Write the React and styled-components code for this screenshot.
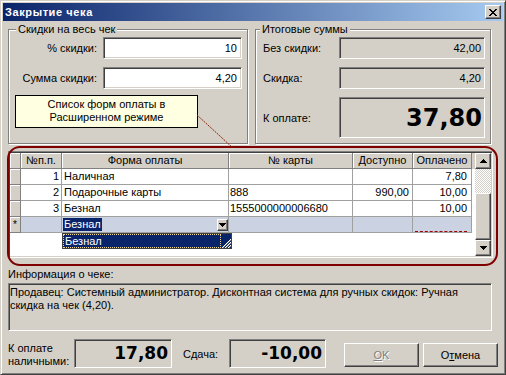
import React from 'react';
import styled, { createGlobalStyle, css } from 'styled-components';

const FACE = '#D4D0C8';

const GlobalStyle = createGlobalStyle`
  html, body { margin: 0; padding: 0; background: ${FACE}; }
  body { font-family: "Liberation Sans", Arial, sans-serif; font-size: 11px; color: #000; }
  *, *::before, *::after { box-sizing: border-box; }
`;

const raised = css`
  border: 1px solid;
  border-color: #fff #404040 #404040 #fff;
  box-shadow: inset -1px -1px #808080;
  background: ${FACE};
`;

const sunken = css`
  border: 1px solid;
  border-color: #808080 #fff #fff #808080;
  box-shadow: inset 1px 1px #404040, inset -1px -1px ${FACE};
`;

const Window = styled.div`
  position: relative;
  width: 506px;
  height: 375px;
  overflow: hidden;
  background: ${FACE};
  border: 1px solid;
  border-color: ${FACE} #404040 #404040 ${FACE};
  box-shadow: inset 1px 1px #fff, inset -1px -1px #808080;
  padding: 2px;
  display: flex;
  flex-direction: column;
`;

const TitleBar = styled.div`
  flex: none;
  height: 18px;
  display: flex;
  align-items: center;
  justify-content: space-between;
  padding: 0 2px;
  background: linear-gradient(to right, #0a246a, #a6caf0);
`;

const TitleText = styled.span`
  color: #fff;
  font-weight: bold;
  font-size: 11px;
  letter-spacing: 0.6px;
`;

const CaptionButton = styled.div`
  ${raised};
  width: 16px;
  height: 14px;
  display: flex;
  align-items: center;
  justify-content: center;
`;

const Body = styled.div`
  flex: 1;
  display: flex;
  flex-direction: column;
  padding: 8px 0 0 5px;
`;

const TopRow = styled.div`
  display: flex;
  gap: 7px;
`;

const Group = styled.div`
  width: ${p => p.$w}px;
  height: 115px;
  border: 1px solid #808080;
  box-shadow: inset 1px 1px #fff, 1px 1px #fff;
`;

const GroupTitle = styled.div`
  width: fit-content;
  margin: -7px 0 0 ${p => p.$ml}px;
  padding: 0 2px;
  line-height: 13px;
  background: ${FACE};
`;

const FieldGrid = styled.div`
  display: grid;
  grid-template-columns: ${p => p.$cols};
  grid-template-rows: ${p => p.$rows};
  column-gap: ${p => p.$gap}px;
  row-gap: 8px;
  margin-top: 1px;
  padding-left: ${p => p.$pl}px;
`;

const FieldLabel = styled.div`
  align-self: center;
  text-align: ${p => p.$align};
  white-space: nowrap;
`;

const Field = styled.div`
  ${sunken};
  display: flex;
  align-items: center;
  justify-content: flex-end;
  padding-right: ${p => p.$pr ?? 4}px;
  background: ${p => (p.$ro ? FACE : '#fff')};
  white-space: nowrap;
`;

const BigNum = styled.span`
  font-family: "DejaVu Sans", Verdana, sans-serif;
  font-weight: bold;
  font-size: ${p => p.$size}px;
  line-height: 1;
`;

const GridBox = styled.div`
  ${sunken};
  margin-top: 7px;
  width: 485px;
  height: 107px;
  display: flex;
  padding: 1px;
`;

const TableArea = styled.div`
  flex: 1;
  background: #fff;
  display: flex;
  flex-direction: column;
`;

const COLS = '11px 41px 167px 124px 60px 59px';

const GRow = styled.div`
  display: grid;
  grid-template-columns: ${COLS};
  height: 16px;
  background: ${p => (p.$header ? FACE : 'transparent')};
`;

const HeadCell = styled.div`
  background: ${FACE};
  border-right: 1px solid #808080;
  border-bottom: 1px solid #808080;
  box-shadow: inset 1px 1px #fff;
  text-align: center;
  line-height: 15px;
  white-space: nowrap;
  overflow: hidden;
`;

const IndCell = styled(HeadCell)`
  font-size: 10px;
`;

const Cell = styled.div`
  position: relative;
  height: 16px;
  padding: 0 ${p => p.$pad ?? 2}px;
  border-right: 1px solid #a0a0a0;
  border-bottom: 1px solid #a0a0a0;
  background: ${p => (p.$new ? '#cbd3e3' : '#fff')};
  text-align: ${p => p.$align || 'left'};
  line-height: 15px;
  white-space: nowrap;
`;

const EditorCell = styled(Cell)`
  display: flex;
  align-items: center;
  justify-content: space-between;
  padding: 0 0 0 1px;
`;

const Selected = styled.span`
  background: #0a246a;
  color: #fff;
  line-height: 13px;
  padding: 0 1px;
`;

const DropBtn = styled.div`
  ${raised};
  width: 11px;
  height: 12px;
  display: flex;
  align-items: center;
  justify-content: center;
`;

const Popup = styled.div`
  position: absolute;
  left: 0;
  top: calc(100% + 1px);
  width: 170px;
  height: 16px;
  border: 1px solid #404040;
  background: #0a246a;
  display: flex;
  align-items: stretch;
  z-index: 2;
`;

const PopupItem = styled.div`
  flex: 1;
  color: #fff;
  border: 1px dotted #f0d890;
  line-height: 12px;
  padding-left: 1px;
`;

const Grip = styled.div`
  width: 10px;
  display: flex;
  align-items: flex-end;
`;

const DashMark = styled.div`
  position: absolute;
  left: 2px;
  right: 4px;
  bottom: 0;
  border-top: 1px dashed #a00000;
`;

const ScrollBar = styled.div`
  width: 16px;
  display: flex;
  flex-direction: column;
`;

const ScrollBtn = styled.div`
  ${raised};
  height: 16px;
  flex: none;
  display: flex;
  align-items: center;
  justify-content: center;
`;

const ScrollTrack = styled.div`
  height: 24px;
  flex: none;
  background: repeating-conic-gradient(#fff 0 25%, ${FACE} 0 50%) 0 0 / 2px 2px;
`;

const ScrollThumb = styled.div`
  ${raised};
  flex: 1;
`;

const InfoLabel = styled.div`
  margin-top: 10px;
  line-height: 13px;
`;

const InfoBox = styled.div`
  ${sunken};
  margin-top: 2px;
  width: 484px;
  height: 48px;
  padding: 2px 0 0 1px;
  line-height: 13px;
  background: ${FACE};
`;

const BottomRow = styled.div`
  margin-top: 8px;
  display: flex;
  align-items: center;
  height: 29px;
`;

const StackLabel = styled.div`
  width: 66px;
  line-height: 13px;
  align-self: flex-start;
  margin-top: 3px;
`;

const AmountBox = styled(Field)`
  width: ${p => p.$w}px;
  height: 29px;
`;

const InlineLabel = styled.div`
  width: ${p => p.$w}px;
  margin-left: ${p => p.$ml}px;
`;

const Button = styled.div`
  ${raised};
  width: 75px;
  height: 24px;
  margin-left: ${p => p.$ml}px;
  align-self: flex-end;
  margin-bottom: 1px;
  display: flex;
  align-items: center;
  justify-content: center;
  color: ${p => (p.$disabled ? '#808080' : '#000')};
  text-shadow: ${p => (p.$disabled ? '1px 1px #fff' : 'none')};
`;

const RedFrame = styled.div`
  position: absolute;
  left: 6px;
  top: 145px;
  width: 491px;
  height: 120px;
  border: 2px solid #800000;
  border-radius: 13px;
  pointer-events: none;
`;

const Callout = styled.div`
  position: absolute;
  left: 14px;
  top: 94px;
  width: 183px;
  height: 33px;
  background: #ffffe1;
  border: 1px solid #000;
  text-align: center;
  line-height: 13px;
  padding-top: 2px;
`;

const Leader = styled.svg`
  position: absolute;
  left: 195px;
  top: 113px;
`;

const CloseIcon = () => (
  <svg width="8" height="7" viewBox="0 0 8 7" shapeRendering="crispEdges">
    <path
      fill="#000"
      d="M0 0h2v1H0zM6 0h2v1H6zM1 1h2v1H1zM5 1h2v1H5zM2 2h4v1H2zM3 3h2v1H3zM2 4h4v1H2zM1 5h2v1H1zM5 5h2v1H5zM0 6h2v1H0zM6 6h2v1H6z"
    />
  </svg>
);

const Arrow = ({ up }) => (
  <svg width="7" height="4" viewBox="0 0 7 4" shapeRendering="crispEdges">
    <path fill="#000" d={up ? 'M3 0h1v1h1v1h1v1h1v1H0V3h1V2h1V1h1z' : 'M0 0h7v1H6v1H5v1H4v1H3V3H2V2H1V1H0z'} />
  </svg>
);

const rows = [
  { n: '1', form: 'Наличная', card: '', avail: '', paid: '7,80' },
  { n: '2', form: 'Подарочные карты', card: '888', avail: '990,00', paid: '10,00' },
  { n: '3', form: 'Безнал', card: '1555000000006680', avail: '', paid: '10,00' },
];

export default function App() {
  return (
    <>
      <GlobalStyle />
      <Window>
        <TitleBar>
          <TitleText>Закрытие чека</TitleText>
          <CaptionButton>
            <CloseIcon />
          </CaptionButton>
        </TitleBar>
        <Body>
          <TopRow>
            <Group $w={240}>
              <GroupTitle $ml={7}>Скидки на весь чек</GroupTitle>
              <FieldGrid $cols="88px 139px" $rows="22px 22px" $gap={6} $pl={0}>
                <FieldLabel $align="right">% скидки:</FieldLabel>
                <Field>10</Field>
                <FieldLabel $align="right">Сумма скидки:</FieldLabel>
                <Field>4,20</Field>
              </FieldGrid>
            </Group>
            <Group $w={236}>
              <GroupTitle $ml={4}>Итоговые суммы</GroupTitle>
              <FieldGrid $cols="76px 146px" $rows="22px 22px 41px" $gap={0} $pl={7}>
                <FieldLabel $align="left">Без скидки:</FieldLabel>
                <Field $ro $pr={3}>42,00</Field>
                <FieldLabel $align="left">Скидка:</FieldLabel>
                <Field $ro $pr={3}>4,20</Field>
                <FieldLabel $align="left">К оплате:</FieldLabel>
                <Field $ro $pr={2}>
                  <BigNum $size={24}>37,80</BigNum>
                </Field>
              </FieldGrid>
            </Group>
          </TopRow>

          <GridBox>
            <TableArea>
              <GRow $header>
                <HeadCell />
                <HeadCell>№п.п.</HeadCell>
                <HeadCell>Форма оплаты</HeadCell>
                <HeadCell>№ карты</HeadCell>
                <HeadCell>Доступно</HeadCell>
                <HeadCell>Оплачено</HeadCell>
              </GRow>
              {rows.map(r => (
                <GRow key={r.n}>
                  <IndCell />
                  <Cell $align="right">{r.n}</Cell>
                  <Cell>{r.form}</Cell>
                  <Cell $pad={1}>{r.card}</Cell>
                  <Cell $align="right" $pad={3}>{r.avail}</Cell>
                  <Cell $align="right" $pad={4}>{r.paid}</Cell>
                </GRow>
              ))}
              <GRow>
                <IndCell>*</IndCell>
                <Cell $new />
                <EditorCell $new>
                  <Selected>Безнал</Selected>
                  <DropBtn>
                    <Arrow />
                  </DropBtn>
                  <Popup>
                    <PopupItem>Безнал</PopupItem>
                    <Grip>
                      <svg width="10" height="10" viewBox="0 0 10 10">
                        <path d="M10 1L1 10M10 4L4 10M10 7L7 10" stroke="#fff" strokeWidth="1" />
                        <path d="M10 2L2 10M10 5L5 10M10 8L8 10" stroke="#808080" strokeWidth="1" />
                      </svg>
                    </Grip>
                  </Popup>
                </EditorCell>
                <Cell $new />
                <Cell $new />
                <Cell $new>
                  <DashMark />
                </Cell>
              </GRow>
            </TableArea>
            <ScrollBar>
              <ScrollBtn>
                <Arrow up />
              </ScrollBtn>
              <ScrollTrack />
              <ScrollThumb />
              <ScrollBtn>
                <Arrow />
              </ScrollBtn>
            </ScrollBar>
          </GridBox>

          <InfoLabel>Информация о чеке:</InfoLabel>
          <InfoBox>
            Продавец: Системный администратор. Дисконтная система для ручных скидок: Ручная
            <br />
            скидка на чек (4,20).
          </InfoBox>

          <BottomRow>
            <StackLabel>
              К оплате
              <br />
              наличными:
            </StackLabel>
            <AmountBox $ro $w={98} $pr={3}>
              <BigNum $size={17}>17,80</BigNum>
            </AmountBox>
            <InlineLabel $ml={11} $w={46}>Сдача:</InlineLabel>
            <AmountBox $ro $w={97} $pr={3}>
              <BigNum $size={17}>-10,00</BigNum>
            </AmountBox>
            <Button $ml={18} $disabled>
              <span><u>O</u>K</span>
            </Button>
            <Button $ml={4}>
              <span>О<u>т</u>мена</span>
            </Button>
          </BottomRow>
        </Body>

        <RedFrame />
        <Callout>
          Список форм оплаты в
          <br />
          Расширенном режиме
        </Callout>
        <Leader width="40" height="36" viewBox="0 0 40 36">
          <line x1="1" y1="1" x2="37" y2="34" stroke="#902000" strokeWidth="1" strokeDasharray="2 1" />
        </Leader>
      </Window>
    </>
  );
}
